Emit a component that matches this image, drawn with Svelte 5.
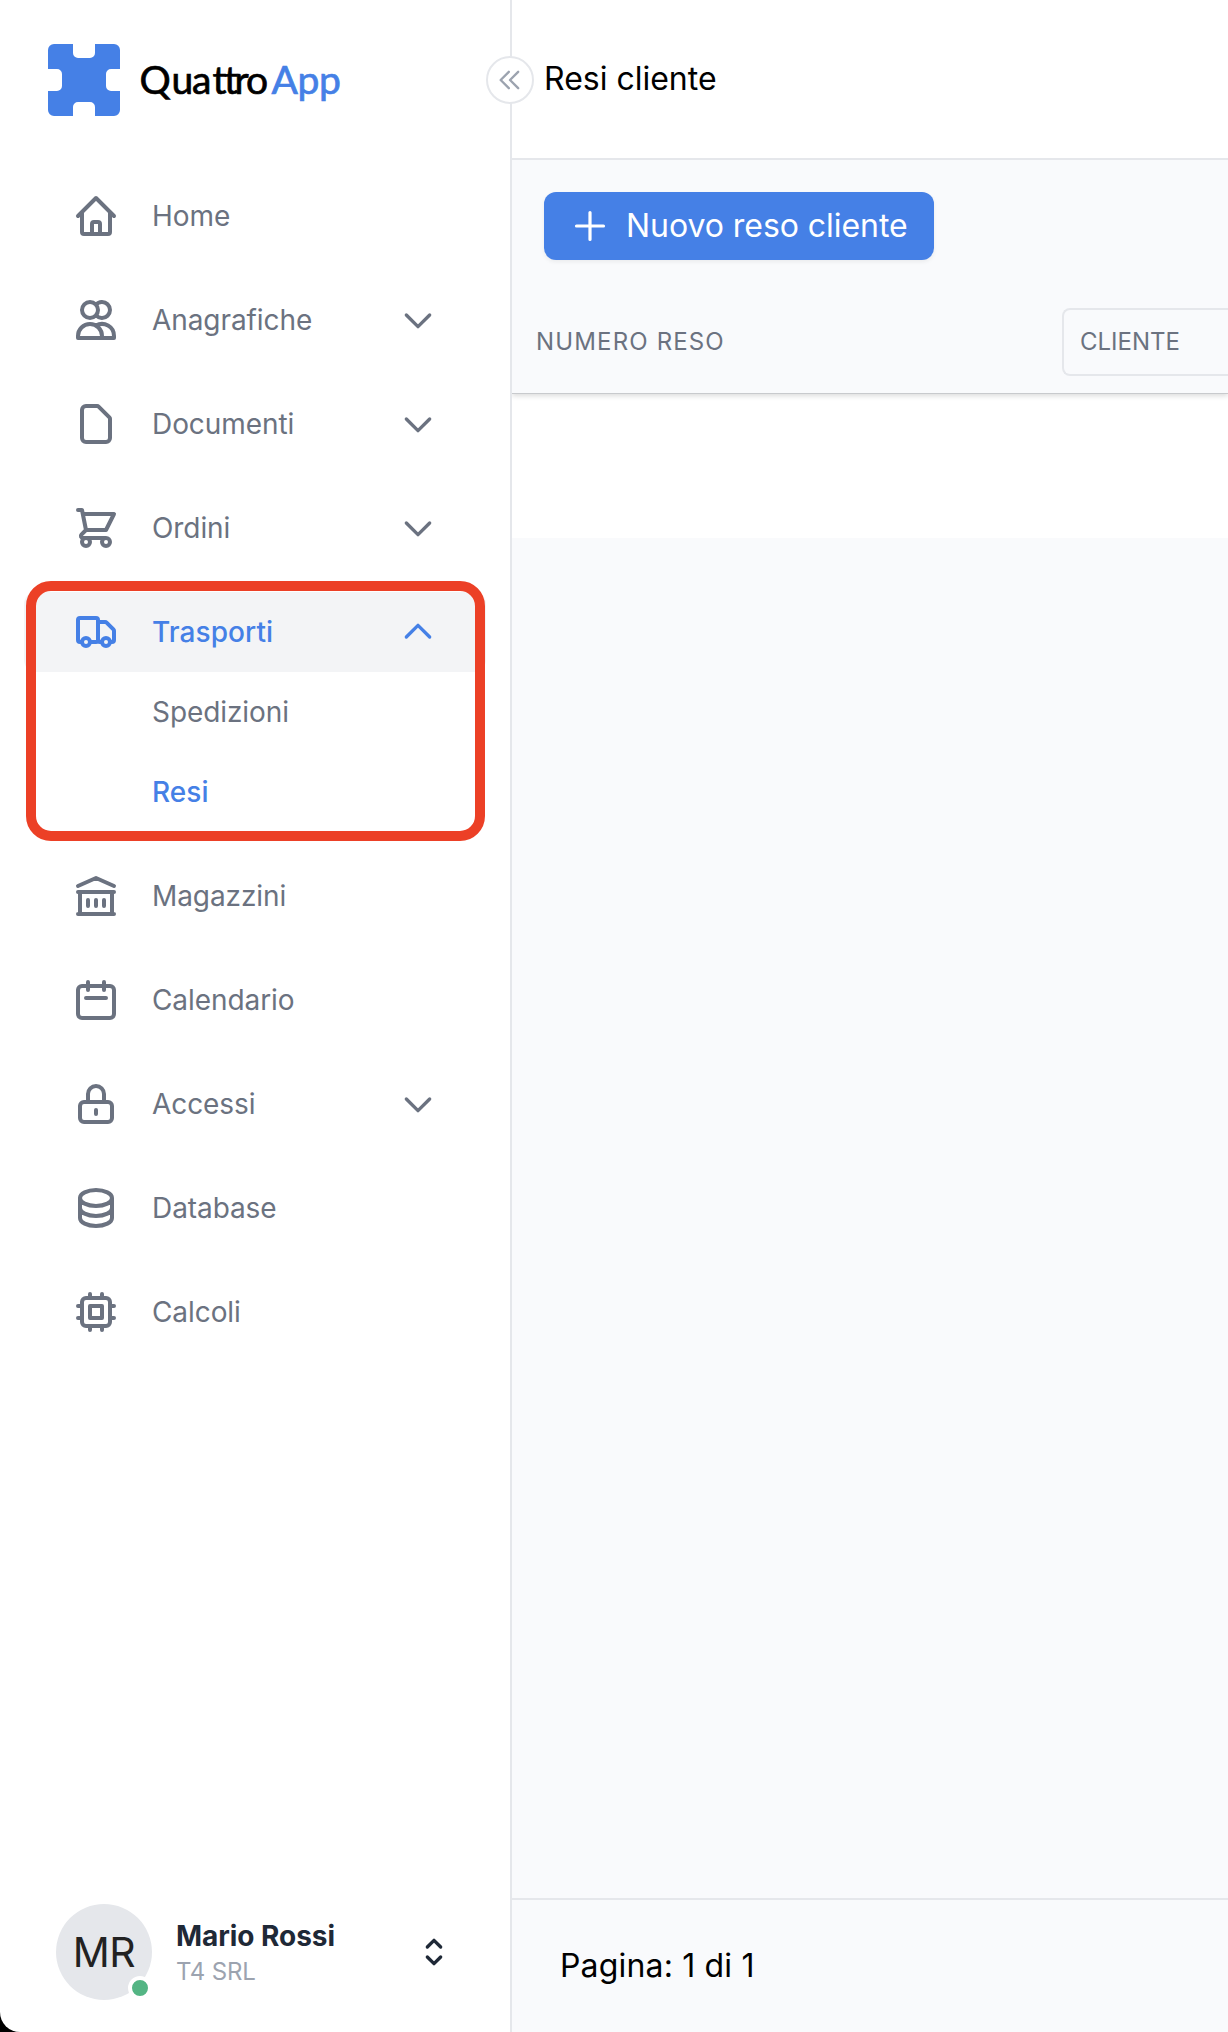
<script>
  const icons = {
    home: 'M3 12l2-2m0 0l7-7 7 7M5 10v10a1 1 0 001 1h3m10-11l2 2m-2-2v10a1 1 0 01-1 1h-3m-6 0a1 1 0 001-1v-4a1 1 0 011-1h2a1 1 0 011 1v4a1 1 0 001 1m-6 0h6',
    users: 'M12 4.354a4 4 0 110 5.292M15 21H3v-1a6 6 0 0112 0v1zm0 0h6v-1a6 6 0 00-9-5.197M13 7a4 4 0 11-8 0 4 4 0 018 0z',
    document: 'M7 21h10a2 2 0 002-2V9.414a1 1 0 00-.293-.707l-5.414-5.414A1 1 0 0012.586 3H7a2 2 0 00-2 2v14a2 2 0 002 2z',
    cart: 'M3 3h2l.4 2M7 13h10l4-8H5.4M7 13L5.4 5M7 13l-2.293 2.293c-.63.63-.184 1.707.707 1.707H17m0 0a2 2 0 100 4 2 2 0 000-4zm-8 2a2 2 0 11-4 0 2 2 0 014 0z',
    truck: 'M9 17a2 2 0 11-4 0 2 2 0 014 0zM19 17a2 2 0 11-4 0 2 2 0 014 0zM13 16V6a1 1 0 00-1-1H4a1 1 0 00-1 1v10a1 1 0 001 1h1m8-1a1 1 0 01-1 1H9m4-1V8a1 1 0 011-1h2.586a1 1 0 01.707.293l3.414 3.414a1 1 0 01.293.707V16a1 1 0 01-1 1h-1m-6-1a1 1 0 001 1h1',
    library: 'M8 14v3m4-3v3m4-3v3M3 21h18M3 10h18M3 7l9-4 9 4M4 10h16v11H4V10z',
    calendar: 'M8 7V3m8 4V3m-9 8h10M5 21h14a2 2 0 002-2V7a2 2 0 00-2-2H5a2 2 0 00-2 2v12a2 2 0 002 2z',
    lock: 'M12 15v2m-6 4h12a2 2 0 002-2v-6a2 2 0 00-2-2H6a2 2 0 00-2 2v6a2 2 0 002 2zm10-10V7a4 4 0 00-8 0v4h8z',
    database: 'M4 7v10c0 2.21 3.582 4 8 4s8-1.79 8-4V7M4 7c0 2.21 3.582 4 8 4s8-1.79 8-4M4 7c0-2.21 3.582-4 8-4s8 1.79 8 4m0 5c0 2.21-3.582 4-8 4s-8-1.79-8-4',
    chip: 'M9 3v2m6-2v2M9 19v2m6-2v2M5 9H3m2 6H3m18-6h-2m2 6h-2M7 19h10a2 2 0 002-2V7a2 2 0 00-2-2H7a2 2 0 00-2 2v10a2 2 0 002 2zM9 9h6v6H9V9z',
    down: 'M19 9l-7 7-7-7',
    up: 'M5 15l7-7 7 7',
    selector: 'M8 9l4-4 4 4m0 6l-4 4-4-4',
    collapse: 'M11 19l-7-7 7-7m8 14l-7-7 7-7'
  };

  const menu = [
    { label: 'Home', icon: 'home' },
    { label: 'Anagrafiche', icon: 'users', expandable: true },
    { label: 'Documenti', icon: 'document', expandable: true },
    { label: 'Ordini', icon: 'cart', expandable: true },
    {
      label: 'Trasporti',
      icon: 'truck',
      expandable: true,
      active: true,
      children: [{ label: 'Spedizioni' }, { label: 'Resi', active: true }]
    },
    { label: 'Magazzini', icon: 'library' },
    { label: 'Calendario', icon: 'calendar' },
    { label: 'Accessi', icon: 'lock', expandable: true },
    { label: 'Database', icon: 'database' },
    { label: 'Calcoli', icon: 'chip' }
  ];
</script>

{#snippet icon(name, cls)}
  <svg class="icon {cls}" viewBox="0 0 24 24" aria-hidden="true"><path d={icons[name]} /></svg>
{/snippet}

<div class="app">
  <aside class="sidebar">
    <div class="brand">
      <svg class="mark" viewBox="0 0 72 72" aria-hidden="true">
        <path d="M6 0H25V9a5 5 0 0 0 5 5H42a5 5 0 0 0 5-5V0H66a6 6 0 0 1 6 6V25H63a5 5 0 0 0-5 5V42a5 5 0 0 0 5 5H72V66a6 6 0 0 1-6 6H47V63a5 5 0 0 0-5-5H30a5 5 0 0 0-5 5V72H6a6 6 0 0 1-6-6V47H9a5 5 0 0 0 5-5V30a5 5 0 0 0-5-5H0V6a6 6 0 0 1 6-6Z" />
      </svg>
      <svg class="wordmark" viewBox="0 0 204 60">
        <text class="quattro" x="-0.5 31.5 52 72.5 84 94.5 106" y="38">Quattro</text>
        <text class="app-word" x="131.5 157.5 179" y="38">App</text>
      </svg>
    </div>

    <button class="collapse" aria-label="Comprimi menu">{@render icon('collapse', 'sm')}</button>

    <nav class="menu">
      {#each menu as item}
        <div class="group">
          <a class="item" class:active={item.active} href="#{item.icon}">
            {@render icon(item.icon, 'lg')}
            <span class="label">{item.label}</span>
            {#if item.expandable}{@render icon(item.children ? 'up' : 'down', 'md')}{/if}
          </a>
          {#each item.children ?? [] as child}
            <a class="sub" class:active={child.active} href="#{child.label}">{child.label}</a>
          {/each}
          {#if item.children}<div class="highlight"></div>{/if}
        </div>
      {/each}
    </nav>

    <div class="profile">
      <div class="avatar">MR<span class="status"></span></div>
      <div class="who">
        <div class="name">Mario Rossi</div>
        <div class="company">T4 SRL</div>
      </div>
      {@render icon('selector', 'md')}
    </div>
  </aside>

  <main class="main">
    <header class="topbar">Resi cliente</header>
    <div class="toolbar">
      <button class="primary">
        <svg class="plus" viewBox="0 0 32 32" aria-hidden="true"><path d="M16 2.5v27M2.5 16h27" /></svg>
        <span class="caption">Nuovo reso cliente</span>
      </button>
    </div>
    <div class="thead">
      <div class="th">NUMERO RESO</div>
      <div class="filter">CLIENTE</div>
    </div>
    <div class="tbody"></div>
    <footer class="pager">Pagina: 1 di 1</footer>
  </main>
</div>

<style>
  :global(body) {
    margin: 0;
    background: #000;
  }
  .app {
    display: flex;
    height: 2032px;
    overflow: hidden;
    border-bottom-left-radius: 20px;
    background: #fff;
    font-family: Inter, 'Liberation Sans', sans-serif;
    color: #000;
  }
  .icon {
    fill: none;
    stroke: currentColor;
    stroke-width: 2;
    stroke-linecap: round;
    stroke-linejoin: round;
    flex: none;
  }
  .sm { width: 28px; height: 28px; }
  .md { width: 40px; height: 40px; }
  .lg { width: 48px; height: 48px; }
  .sidebar {
    position: relative;
    box-sizing: border-box;
    width: 512px;
    flex: none;
    display: flex;
    flex-direction: column;
    border-right: 2px solid #e5e7eb;
  }
  .brand {
    display: flex;
    align-items: center;
    height: 160px;
    padding-left: 48px;
    box-sizing: border-box;
  }
  .mark {
    width: 72px;
    height: 72px;
    fill: #4580e6;
  }
  .wordmark {
    width: 204px;
    height: 60px;
    margin: 12px 0 0 20px;
    font: 400 39px Lato, sans-serif;
    overflow: visible;
  }
  .quattro { fill: #000; stroke: #000; stroke-width: 0.7; }
  .app-word { fill: #4580e6; stroke: #4580e6; stroke-width: 0.7; }
  .collapse {
    position: absolute;
    top: 56px;
    right: -24px;
    width: 48px;
    height: 48px;
    padding: 0;
    display: flex;
    align-items: center;
    justify-content: center;
    border: 2px solid #e5e7eb;
    border-radius: 50%;
    background: #fff;
    color: #9ca3af;
  }
  .menu {
    display: flex;
    flex-direction: column;
    gap: 24px;
    padding: 16px 24px;
  }
  .group {
    position: relative;
    display: flex;
    flex-direction: column;
  }
  .item, .sub {
    display: flex;
    align-items: center;
    height: 80px;
    box-sizing: border-box;
    font-size: 28px;
    letter-spacing: -0.08px;
    color: #6b7280;
    text-decoration: none;
  }
  .item {
    padding: 0 48px;
    gap: 32px;
    border-radius: 12px;
  }
  .sub { padding-left: 128px; }
  .label { flex: 1; }
  .item.active {
    background: #f3f4f6;
  }
  .item.active, .sub.active {
    color: #4580e6;
    font-weight: 500;
    letter-spacing: 0.08px;
  }
  .highlight {
    position: absolute;
    inset: -11px 1px -9px 2px;
    border: 10px solid #ec4026;
    border-radius: 25px;
    pointer-events: none;
  }
  .profile {
    display: flex;
    align-items: center;
    margin-top: auto;
    padding: 0 56px 32px;
    color: #1f2937;
  }
  .avatar {
    position: relative;
    width: 96px;
    height: 96px;
    display: flex;
    align-items: center;
    justify-content: center;
    border-radius: 50%;
    background: #e5e7eb;
    color: #222;
    font-size: 41px;
    letter-spacing: -0.5px;
  }
  .status {
    position: absolute;
    right: 0;
    bottom: 0;
    width: 16px;
    height: 16px;
    border: 4px solid #fff;
    border-radius: 50%;
    background: #54b584;
  }
  .who {
    flex: 1;
    padding-left: 24px;
  }
  .name {
    font-size: 28px;
    line-height: 40px;
    font-weight: 700;
    letter-spacing: -0.05px;
  }
  .company {
    font-size: 24px;
    line-height: 32px;
    letter-spacing: -0.15px;
    color: #9ca3af;
  }
  .main {
    flex: 1;
    min-width: 0;
    display: flex;
    flex-direction: column;
    background: #f9fafc;
  }
  .topbar {
    box-sizing: border-box;
    height: 160px;
    padding: 0 32px 2px;
    display: flex;
    align-items: center;
    background: #fff;
    border-bottom: 2px solid #e5e7eb;
    font-size: 32px;
  }
  .toolbar {
    display: flex;
    padding: 32px 32px 32px;
  }
  .primary {
    display: flex;
    align-items: center;
    gap: 20px;
    width: 390px;
    height: 68px;
    padding: 0 0 0 30px;
    border: 0;
    border-radius: 12px;
    background: #4580e6;
    box-shadow: 0 2px 4px rgba(0, 0, 0, 0.06);
    color: #fff;
    font: 400 32px Inter, sans-serif;
    letter-spacing: -0.05px;
    white-space: nowrap;
  }
  .caption { padding-bottom: 2px; }
  .plus {
    flex: none;
    width: 32px;
    height: 32px;
    fill: none;
    stroke: #fff;
    stroke-width: 3.2;
    stroke-linecap: round;
  }
  .thead {
    display: flex;
    align-items: center;
    justify-content: space-between;
    height: 101px;
    box-sizing: border-box;
    padding: 0 0 1px 24px;
    box-shadow: 0 1px 0 #c8cacd, 0 3px 5px rgba(0, 0, 0, 0.14);
    clip-path: inset(0 0 -12px 0);
    font-size: 24px;
    color: #6b7280;
    z-index: 1;
  }
  .th {
    padding-bottom: 2px;
    letter-spacing: 1.15px;
  }
  .filter {
    box-sizing: border-box;
    width: 166px;
    height: 68px;
    display: flex;
    align-items: center;
    padding: 0 0 2px 16px;
    border: 2px solid #e5e7eb;
    border-right: 0;
    border-radius: 8px 0 0 8px;
  }
  .tbody {
    height: 145px;
    background: #fff;
  }
  .pager {
    box-sizing: border-box;
    height: 134px;
    margin-top: auto;
    padding: 0 48px 2px;
    display: flex;
    align-items: center;
    border-top: 2px solid #e5e7eb;
    font-size: 32px;
    letter-spacing: 0.17px;
  }
</style>
